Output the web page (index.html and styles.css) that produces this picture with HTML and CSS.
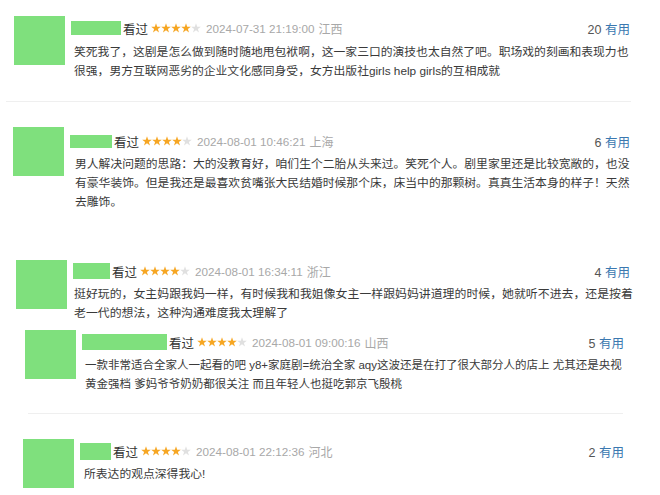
FILE: index.html
```html
<!DOCTYPE html>
<html lang="zh-CN">
<head>
<meta charset="utf-8">
<title>短评</title>
<link rel="stylesheet" href="styles.css">
</head>
<body>
<div class="list">

  <div class="comment c1">
    <div class="avatar"></div>
    <div class="body">
      <div class="meta">
        <span class="name n1"></span>
        <span class="watched">看过</span>
        <svg class="stars" width="50" height="10" viewBox="0 0 50 10"><g class="on"><polygon points="5,0.3 6.2,3.7 9.8,3.7 6.9,5.9 8,9.5 5,7.3 2,9.5 3.1,5.9 0.2,3.7 3.8,3.7"/><polygon transform="translate(10 0)" points="5,0.3 6.2,3.7 9.8,3.7 6.9,5.9 8,9.5 5,7.3 2,9.5 3.1,5.9 0.2,3.7 3.8,3.7"/><polygon transform="translate(20 0)" points="5,0.3 6.2,3.7 9.8,3.7 6.9,5.9 8,9.5 5,7.3 2,9.5 3.1,5.9 0.2,3.7 3.8,3.7"/><polygon transform="translate(30 0)" points="5,0.3 6.2,3.7 9.8,3.7 6.9,5.9 8,9.5 5,7.3 2,9.5 3.1,5.9 0.2,3.7 3.8,3.7"/></g><polygon class="off" transform="translate(40 0)" points="5,0.3 6.2,3.7 9.8,3.7 6.9,5.9 8,9.5 5,7.3 2,9.5 3.1,5.9 0.2,3.7 3.8,3.7"/></svg>
        <span class="time">2024-07-31 21:19:00</span>
        <span class="loc">江西</span>
        <span class="votes"><span class="count">20</span> <span class="useful">有用</span></span>
      </div>
      <p class="text t1">笑死我了，这剧是怎么做到随时随地甩包袱啊，这一家三口的演技也太自然了吧。职场戏的刻画和表现力也<br>很强，男方互联网恶劣的企业文化感同身受，女方出版社girls help girls的互相成就</p>
    </div>
  </div>

  <div class="divider d1"></div>

  <div class="comment c2">
    <div class="avatar"></div>
    <div class="body">
      <div class="meta">
        <span class="name n2"></span>
        <span class="watched">看过</span>
        <svg class="stars" width="50" height="10" viewBox="0 0 50 10"><g class="on"><polygon points="5,0.3 6.2,3.7 9.8,3.7 6.9,5.9 8,9.5 5,7.3 2,9.5 3.1,5.9 0.2,3.7 3.8,3.7"/><polygon transform="translate(10 0)" points="5,0.3 6.2,3.7 9.8,3.7 6.9,5.9 8,9.5 5,7.3 2,9.5 3.1,5.9 0.2,3.7 3.8,3.7"/><polygon transform="translate(20 0)" points="5,0.3 6.2,3.7 9.8,3.7 6.9,5.9 8,9.5 5,7.3 2,9.5 3.1,5.9 0.2,3.7 3.8,3.7"/><polygon transform="translate(30 0)" points="5,0.3 6.2,3.7 9.8,3.7 6.9,5.9 8,9.5 5,7.3 2,9.5 3.1,5.9 0.2,3.7 3.8,3.7"/></g><polygon class="off" transform="translate(40 0)" points="5,0.3 6.2,3.7 9.8,3.7 6.9,5.9 8,9.5 5,7.3 2,9.5 3.1,5.9 0.2,3.7 3.8,3.7"/></svg>
        <span class="time">2024-08-01 10:46:21</span>
        <span class="loc">上海</span>
        <span class="votes"><span class="count">6</span> <span class="useful">有用</span></span>
      </div>
      <p class="text t2">男人解决问题的思路：大的没教育好，咱们生个二胎从头来过。笑死个人。剧里家里还是比较宽敞的，也没<br>有豪华装饰。但是我还是最喜欢贫嘴张大民结婚时候那个床，床当中的那颗树。真真生活本身的样子！天然<br>去雕饰。</p>
    </div>
  </div>

  <div class="comment c3">
    <div class="avatar"></div>
    <div class="body">
      <div class="meta">
        <span class="name n3"></span>
        <span class="watched">看过</span>
        <svg class="stars" width="50" height="10" viewBox="0 0 50 10"><g class="on"><polygon points="5,0.3 6.2,3.7 9.8,3.7 6.9,5.9 8,9.5 5,7.3 2,9.5 3.1,5.9 0.2,3.7 3.8,3.7"/><polygon transform="translate(10 0)" points="5,0.3 6.2,3.7 9.8,3.7 6.9,5.9 8,9.5 5,7.3 2,9.5 3.1,5.9 0.2,3.7 3.8,3.7"/><polygon transform="translate(20 0)" points="5,0.3 6.2,3.7 9.8,3.7 6.9,5.9 8,9.5 5,7.3 2,9.5 3.1,5.9 0.2,3.7 3.8,3.7"/><polygon transform="translate(30 0)" points="5,0.3 6.2,3.7 9.8,3.7 6.9,5.9 8,9.5 5,7.3 2,9.5 3.1,5.9 0.2,3.7 3.8,3.7"/></g><polygon class="off" transform="translate(40 0)" points="5,0.3 6.2,3.7 9.8,3.7 6.9,5.9 8,9.5 5,7.3 2,9.5 3.1,5.9 0.2,3.7 3.8,3.7"/></svg>
        <span class="time">2024-08-01 16:34:11</span>
        <span class="loc">浙江</span>
        <span class="votes"><span class="count">4</span> <span class="useful">有用</span></span>
      </div>
      <p class="text t3">挺好玩的，女主妈跟我妈一样，有时候我和我姐像女主一样跟妈妈讲道理的时候，她就听不进去，还是按着<br>老一代的想法，这种沟通难度我太理解了</p>
    </div>
  </div>

  <div class="comment c4">
    <div class="avatar"></div>
    <div class="body">
      <div class="meta">
        <span class="name n4"></span>
        <span class="watched">看过</span>
        <svg class="stars" width="50" height="10" viewBox="0 0 50 10"><g class="on"><polygon points="5,0.3 6.2,3.7 9.8,3.7 6.9,5.9 8,9.5 5,7.3 2,9.5 3.1,5.9 0.2,3.7 3.8,3.7"/><polygon transform="translate(10 0)" points="5,0.3 6.2,3.7 9.8,3.7 6.9,5.9 8,9.5 5,7.3 2,9.5 3.1,5.9 0.2,3.7 3.8,3.7"/><polygon transform="translate(20 0)" points="5,0.3 6.2,3.7 9.8,3.7 6.9,5.9 8,9.5 5,7.3 2,9.5 3.1,5.9 0.2,3.7 3.8,3.7"/><polygon transform="translate(30 0)" points="5,0.3 6.2,3.7 9.8,3.7 6.9,5.9 8,9.5 5,7.3 2,9.5 3.1,5.9 0.2,3.7 3.8,3.7"/></g><polygon class="off" transform="translate(40 0)" points="5,0.3 6.2,3.7 9.8,3.7 6.9,5.9 8,9.5 5,7.3 2,9.5 3.1,5.9 0.2,3.7 3.8,3.7"/></svg>
        <span class="time">2024-08-01 09:00:16</span>
        <span class="loc">山西</span>
        <span class="votes"><span class="count">5</span> <span class="useful">有用</span></span>
      </div>
      <p class="text t4">一款非常适合全家人一起看的吧 y8+家庭剧=统治全家 aqy这波还是在打了很大部分人的店上 尤其还是央视<br>黄金强档 爹妈爷爷奶奶都很关注 而且年轻人也挺吃郭京飞殷桃</p>
    </div>
  </div>

  <div class="divider d2"></div>

  <div class="comment c5">
    <div class="avatar"></div>
    <div class="body">
      <div class="meta">
        <span class="name n5"></span>
        <span class="watched">看过</span>
        <svg class="stars" width="50" height="10" viewBox="0 0 50 10"><g class="on"><polygon points="5,0.3 6.2,3.7 9.8,3.7 6.9,5.9 8,9.5 5,7.3 2,9.5 3.1,5.9 0.2,3.7 3.8,3.7"/><polygon transform="translate(10 0)" points="5,0.3 6.2,3.7 9.8,3.7 6.9,5.9 8,9.5 5,7.3 2,9.5 3.1,5.9 0.2,3.7 3.8,3.7"/><polygon transform="translate(20 0)" points="5,0.3 6.2,3.7 9.8,3.7 6.9,5.9 8,9.5 5,7.3 2,9.5 3.1,5.9 0.2,3.7 3.8,3.7"/><polygon transform="translate(30 0)" points="5,0.3 6.2,3.7 9.8,3.7 6.9,5.9 8,9.5 5,7.3 2,9.5 3.1,5.9 0.2,3.7 3.8,3.7"/></g><polygon class="off" transform="translate(40 0)" points="5,0.3 6.2,3.7 9.8,3.7 6.9,5.9 8,9.5 5,7.3 2,9.5 3.1,5.9 0.2,3.7 3.8,3.7"/></svg>
        <span class="time">2024-08-01 22:12:36</span>
        <span class="loc">河北</span>
        <span class="votes"><span class="count">2</span> <span class="useful">有用</span></span>
      </div>
      <p class="text t5">所表达的观点深得我心!</p>
    </div>
  </div>

</div>
</body>
</html>
```

FILE: styles.css
```css
html, body {
  margin: 0;
  padding: 0;
  background: #ffffff;
}

body {
  width: 660px;
  height: 495px;
  overflow: hidden;
  font-family: "Liberation Sans", "Noto Sans CJK SC", sans-serif;
  color: #333333;
}

.list {
  display: flex;
  flex-direction: column;
}

.comment {
  display: flex;
  align-items: flex-start;
  gap: 6px;
}

.avatar {
  flex: none;
  width: 51px;
  height: 49px;
  background: #7fe07d;
}

.body {
  flex: 1;
  min-width: 0;
}

.meta {
  display: flex;
  align-items: center;
  height: 24px;
  font-size: 12.5px;
}

.name {
  display: block;
  height: 15px;
  background: #7fe07d;
  margin-right: 2px;
}

.n1 { width: 50px; height: 14px; }
.n2 { width: 42px; height: 13px; }
.n3 { width: 37px; height: 16px; }
.n4 { width: 85px; height: 16px; }
.n5 { width: 31px; height: 17px; }

.watched {
  color: #333333;
  margin-right: 3px;
}

.stars {
  display: block;
  flex: none;
  width: 50px;
  height: 10px;
  margin-right: 5px;
}

.stars .on polygon { fill: #f6a623; }
.stars .off { fill: #e0e0e0; }

.time {
  color: #a8a8a8;
  font-size: 11.7px;
  margin-right: 4px;
}

.loc {
  color: #a8a8a8;
  font-size: 12px;
}

.votes {
  margin-left: auto;
  font-size: 12.5px;
  color: #555555;
}

.useful {
  color: #3a78b0;
}

.text {
  margin: 2px 0 0 0;
  line-height: 19px;
  white-space: nowrap;
  color: #3a3a3a;
}

.t1 { font-size: 11.8px; margin-top: 3px; padding-left: 3px; }
.t2 { font-size: 11.8px; padding-left: 5px; }
.t3 { font-size: 11.9px; padding-left: 1px; }
.t4 { font-size: 11.5px; padding-left: 3px; }
.t5 { font-size: 11.8px; padding-left: 4px; }

.c1 { margin-top: 16px; padding: 0 30px 0 14px; }
.c2 { margin-top: 25px; padding: 0 30px 0 13px; }
.c3 { margin-top: 48px; padding: 0 30px 0 16px; }
.c4 { margin-top: 7px; padding: 0 36px 0 25px; }
.c5 { margin-top: 25px; padding: 0 36px 0 23px; }

.c2 .meta { margin-top: 2px; }
.c3 .meta { margin-top: -1px; }

.divider {
  height: 1px;
  background: #efefef;
}

.d1 { margin: 20px 29px 0 6px; }
.d2 { margin: 19px 37px 0 28px; }
```
